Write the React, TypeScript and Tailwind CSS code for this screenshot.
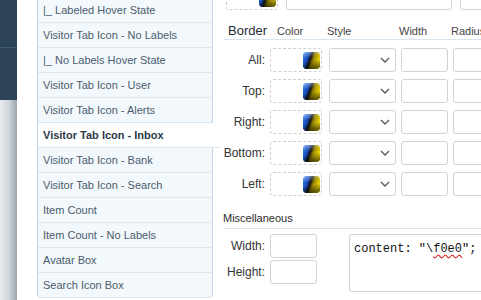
import React from "react";

const navItems = [
  "|_ Labeled Hover State",
  "Visitor Tab Icon - No Labels",
  "|_ No Labels Hover State",
  "Visitor Tab Icon - User",
  "Visitor Tab Icon - Alerts",
  "Visitor Tab Icon - Inbox",
  "Visitor Tab Icon - Bank",
  "Visitor Tab Icon - Search",
  "Item Count",
  "Item Count - No Labels",
  "Avatar Box",
  "Search Icon Box",
];

const sides = ["All:", "Top:", "Right:", "Bottom:", "Left:"];

// little colour-picker square
const Swatch = () => (
  <svg width="17" height="17" viewBox="0 0 17 17" className="block rounded-[3px]">
    <defs>
      <linearGradient id="hue" x1="0" y1="0.1" x2="1" y2="0.45">
        <stop offset="0" stopColor="#2a78ea" />
        <stop offset="0.3" stopColor="#1a50c0" />
        <stop offset="0.48" stopColor="#141414" />
        <stop offset="0.65" stopColor="#9a8800" />
        <stop offset="1" stopColor="#f4dc10" />
      </linearGradient>
      <linearGradient id="shade" x1="0" y1="0" x2="0.2" y2="1">
        <stop offset="0" stopColor="#fff" stopOpacity="0.45" />
        <stop offset="0.4" stopColor="#fff" stopOpacity="0" />
        <stop offset="0.6" stopColor="#000" stopOpacity="0" />
        <stop offset="1" stopColor="#000" stopOpacity="0.55" />
      </linearGradient>
    </defs>
    <rect width="17" height="17" rx="3" fill="url(#hue)" />
    <rect width="17" height="17" rx="3" fill="url(#shade)" />
  </svg>
);

const ColorBox = () => (
  <div className="w-[52px] h-[24px] border border-dashed border-[#cfcfcf] rounded-[3px] flex items-center justify-end pr-px">
    <Swatch />
  </div>
);

const Input = ({ className }: { className: string }) => (
  <div className={`h-[24px] border border-[#d2d2d2] rounded-[3px] bg-white ${className}`} />
);

const App: React.FC = () => {
  return (
    <div className="w-[481px] h-[300px] flex overflow-hidden bg-white text-[11px] font-['Liberation_Sans',Arial,sans-serif]">
      {/* === STRIP KIRI === */}
      <div className="w-[17px] shrink-0 flex flex-col">
        <div className="h-[100px] bg-[#2c4357] flex flex-col">
          <div className="h-[48px] border-b border-[#3e5a71]" />
        </div>
        <div className="flex-1 bg-gradient-to-r from-[#e9ecef] via-[#d2d7dc] to-[#9aa4ad]" />
      </div>

      <div className="w-[20px] shrink-0" />

      {/* === LIST NAV === */}
      <div className="w-[183px] shrink-0 -mt-[2px]">
        {navItems.map((label, i) => {
          const active = label === "Visitor Tab Icon - Inbox";
          const last = i === navItems.length - 1;
          return (
            <div
              key={label}
              className={`h-[25px] flex items-center pl-[5px] border-b border-l border-[#c3d5e4] ${
                active
                  ? "w-[183px] bg-white font-bold text-[#2b3947] border-b-[#dbe5ee]"
                  : "w-[176px] bg-[#f3f8fc] text-[#4a5c6d] border-r border-b-[#dbe5ee]"
              } ${last ? "rounded-b-[4px] border-b-[#c3d5e4]" : ""}`}
            >
              {label}
            </div>
          );
        })}
      </div>

      {/* === PANEL KANAN === */}
      <div className="flex-1 flex flex-col text-[#3a3a3a]">
        {/* sisa baris sebelumnya */}
        <div className="h-[10px] flex items-end pl-[6px]">
          <div className="h-[24px] flex gap-[8px] -mt-[14px]">
            <ColorBox />
            <Input className="w-[166px]" />
            <Input className="w-[40px]" />
          </div>
        </div>

        {/* header Border */}
        <div className="h-[30px] flex items-end border-b border-[#d6e4ef] ml-[4px] leading-[16px] whitespace-nowrap">
          <div className="w-[41px] pl-[4px] text-[13px] text-[#1f2b36]">Border</div>
          <div className="w-[59px] pl-[12px] text-[#444]">Color</div>
          <div className="w-[72px] pl-[3px] text-[#444]">Style</div>
          <div className="w-[52px] pl-[3px] text-[#444]">Width</div>
          <div className="pl-[3px] text-[#444]">Radius</div>
        </div>

        <div className="pt-[8px] flex flex-col gap-[7px]">
          {sides.map((s) => (
            <div key={s} className="flex items-center">
              <div className="w-[45px] text-right text-[12px] text-[#333]">{s}</div>
              <div className="w-[5px]" />
              <ColorBox />
              <div className="w-[7px]" />
              <div className="w-[67px] h-[24px] border border-[#d2d2d2] rounded-[3px] bg-white flex items-center justify-end pr-[5px]">
                <svg width="10" height="6" viewBox="0 0 10 6">
                  <path d="M1 1l4 4 4-4" fill="none" stroke="#555" strokeWidth="1.3" />
                </svg>
              </div>
              <div className="w-[5px]" />
              <Input className="w-[47px]" />
              <div className="w-[5px]" />
              <Input className="w-[47px] shrink-0" />
            </div>
          ))}
        </div>

        {/* Miscellaneous */}
        <div className="mt-[11px] h-[22px] flex items-end pb-[3px] leading-[14px] border-b border-[#d6e4ef] ml-[3px] text-[#2a2a2a]">
          Miscellaneous
        </div>
        <div className="pt-[5px] flex">
          <div className="flex flex-col gap-[2px]">
            {["Width:", "Height:"].map((l) => (
              <div key={l} className="flex items-center">
                <div className="w-[45px] text-right text-[12px] text-[#333]">{l}</div>
                <div className="w-[5px]" />
                <Input className="w-[47px] h-[23px]" />
              </div>
            ))}
          </div>
          <div className="ml-[32px] w-[140px] h-[58px] border border-[#d2d2d2] rounded-[3px] pl-[4px] pt-[5px] font-['Liberation_Mono',monospace] text-[12px] text-[#111] whitespace-pre">
            {'content: "\\'}
            <span className="underline decoration-wavy decoration-[#e03030] underline-offset-2">f0e0</span>
            {'";'}
          </div>
        </div>
      </div>
    </div>
  );
};

export default App;
